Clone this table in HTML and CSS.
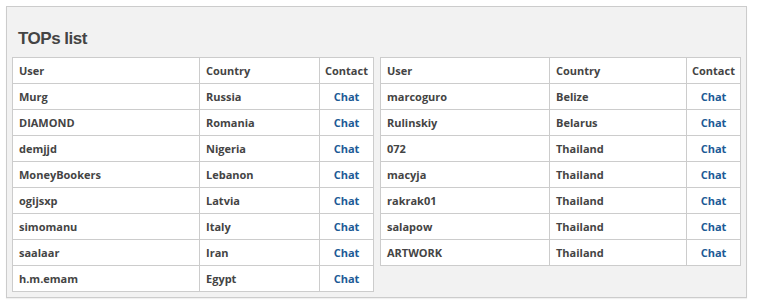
FILE: index.html
```html
<!DOCTYPE html>
<html lang="en">
<head>
    <meta charset="UTF-8">
    <meta name="viewport" content="width=device-width, initial-scale=1.0">
    <title>TOPs list</title>
    <link rel="stylesheet" href="styles.css">
</head>
<body>
    <div class="box">
        <h2>TOPs list</h2>
        <div class="tables">
            <table class="tops tops-left">
                <colgroup>
                    <col class="c-user">
                    <col class="c-country">
                    <col class="c-contact">
                </colgroup>
                <thead>
                    <tr><th>User</th><th>Country</th><th class="contact">Contact</th></tr>
                </thead>
                <tbody>
                    <tr><td>Murg</td><td>Russia</td><td class="contact"><a href="#">Chat</a></td></tr>
                    <tr><td>DIAMOND</td><td>Romania</td><td class="contact"><a href="#">Chat</a></td></tr>
                    <tr><td>demjjd</td><td>Nigeria</td><td class="contact"><a href="#">Chat</a></td></tr>
                    <tr><td>MoneyBookers</td><td>Lebanon</td><td class="contact"><a href="#">Chat</a></td></tr>
                    <tr><td>ogijsxp</td><td>Latvia</td><td class="contact"><a href="#">Chat</a></td></tr>
                    <tr><td>simomanu</td><td>Italy</td><td class="contact"><a href="#">Chat</a></td></tr>
                    <tr><td>saalaar</td><td>Iran</td><td class="contact"><a href="#">Chat</a></td></tr>
                    <tr><td>h.m.emam</td><td>Egypt</td><td class="contact"><a href="#">Chat</a></td></tr>
                </tbody>
            </table>
            <table class="tops tops-right">
                <colgroup>
                    <col class="c-user">
                    <col class="c-country">
                    <col class="c-contact">
                </colgroup>
                <thead>
                    <tr><th>User</th><th>Country</th><th class="contact">Contact</th></tr>
                </thead>
                <tbody>
                    <tr><td>marcoguro</td><td>Belize</td><td class="contact"><a href="#">Chat</a></td></tr>
                    <tr><td>Rulinskiy</td><td>Belarus</td><td class="contact"><a href="#">Chat</a></td></tr>
                    <tr><td>072</td><td>Thailand</td><td class="contact"><a href="#">Chat</a></td></tr>
                    <tr><td>macyja</td><td>Thailand</td><td class="contact"><a href="#">Chat</a></td></tr>
                    <tr><td>rakrak01</td><td>Thailand</td><td class="contact"><a href="#">Chat</a></td></tr>
                    <tr><td>salapow</td><td>Thailand</td><td class="contact"><a href="#">Chat</a></td></tr>
                    <tr><td>ARTWORK</td><td>Thailand</td><td class="contact"><a href="#">Chat</a></td></tr>
                </tbody>
            </table>
        </div>
    </div>
</body>
</html>
```

FILE: styles.css
```css
body {
    margin: 0;
    padding: 6px;
    font-family: "Open Sans", Arial, sans-serif;
    color: #444;
    background: #fff;
}
.box {
    width: 729px;
    padding: 0 5px 5px 5px;
    background: #f2f2f2;
    border: 1px solid #ccc;
    box-shadow: 0 1px 1px rgba(0,0,0,0.06);
}
h2 {
    margin: 0;
    padding: 21px 0 8px 6px;
    font-family: "Liberation Sans", Arial, sans-serif;
    font-size: 17px;
    letter-spacing: -0.5px;
    line-height: 21px;
    color: #444;
}
.tables {
    display: flex;
    align-items: flex-start;
    gap: 6px;
}
table.tops {
    border-collapse: collapse;
    table-layout: fixed;
    background: #fff;
}
.tops-left { width: 363px; }
.tops-right { width: 362px; }
.tops-left .c-user { width: 187px; }
.tops-left .c-country { width: 120px; }
.tops-right .c-user { width: 169px; }
.tops-right .c-country { width: 137px; }
.tops th, .tops td {
    height: 25px;
    padding: 0 6px;
    border: 1px solid #ccc;
    text-align: left;
    font-size: 11px;
    font-weight: bold;
    line-height: 16px;
    color: #444;
    white-space: nowrap;
}
.tops .contact {
    padding: 0;
    text-align: center;
}
.tops a {
    color: #1d5a96;
    text-decoration: none;
}
```
